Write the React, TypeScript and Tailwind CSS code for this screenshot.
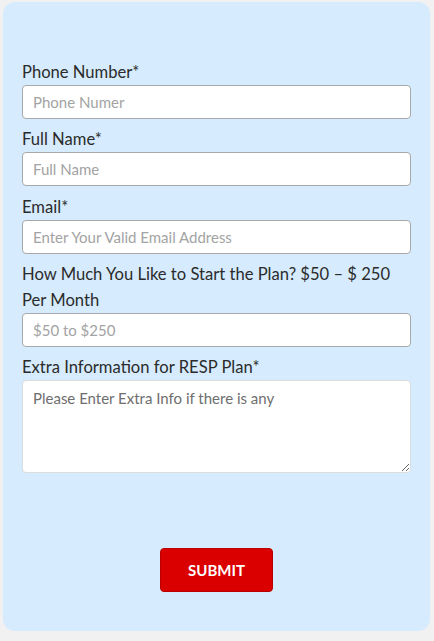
import React from 'react'

const inputCls =
  'block w-full h-[34px] rounded-[4px] border border-[#a8a8a8] bg-white px-[10px] text-[15px] text-[#333] placeholder:text-[#a3a3a3] outline-none'

function Label({ children }: { children: React.ReactNode }) {
  return <label className="block text-[16.6px] leading-[26px] text-[#2b2b2b]">{children}</label>
}

export default function App() {
  return (
    <div className="min-h-[641px] bg-[#f1f1f1] pt-[2px] pl-[3px] pr-[4px]" style={{ fontFamily: 'Lato, "Open Sans", sans-serif' }}>
      <form className="h-[629px] rounded-[12px] bg-[#d6ebfd] px-[19px] pt-[57px]">
        <div className="flex flex-col gap-[7px]">
          <div>
            <Label>Phone Number*</Label>
            <input className={inputCls} placeholder="Phone Numer" />
          </div>
          <div>
            <Label>Full Name*</Label>
            <input className={inputCls} placeholder="Full Name" />
          </div>
          <div className="pt-[1px]">
            <Label>Email*</Label>
            <input className={inputCls} placeholder="Enter Your Valid Email Address" />
          </div>
          <div>
            <Label>How Much You Like to Start the Plan? $50 – $ 250 Per Month</Label>
            <input className={inputCls} placeholder="$50 to $250" />
          </div>
          <div>
            <Label>Extra Information for RESP Plan*</Label>
            <textarea
              className="block w-full h-[93px] rounded-[4px] border border-[#dcdcdc] bg-white px-[10px] py-[6px] text-[15px] leading-[22px] text-[#333] placeholder:text-[#6e6e6e] outline-none"
              placeholder="Please Enter Extra Info if there is any"
            />
          </div>
        </div>
        <div className="flex justify-center pt-[75px]">
          <button
            type="button"
            className="h-[44px] w-[113px] rounded-[4px] border border-[#b80000] bg-[#da0000] text-[15px] font-bold uppercase text-white"
          >
            Submit
          </button>
        </div>
      </form>
    </div>
  )
}
